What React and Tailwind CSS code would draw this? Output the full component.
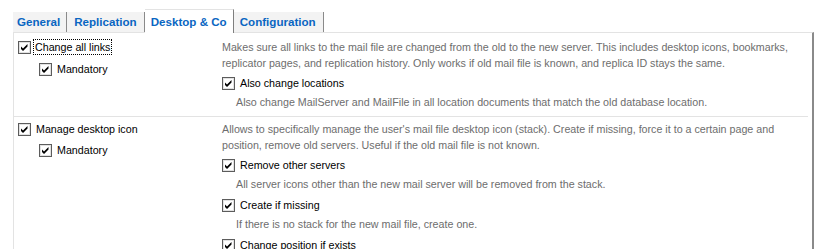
import React from "react";

const Check = () => (
  <svg width="13" height="13" viewBox="0 0 13 13" className="shrink-0">
    <rect x="0.5" y="0.5" width="12" height="12" fill="#fff" stroke="#5c5c5c" />
    <rect x="1.5" y="1.5" width="10" height="10" fill="none" stroke="#e2e2e2" />
    <polygon points="3,5.5 5,7.5 9.5,3 9.5,5.5 5,10 3,8" fill="#000" />
  </svg>
);

const Option = ({ label, focus, className = "" }) => (
  <div className={`flex items-center h-[16px] ${className}`}>
    <Check />
    <span
      className={
        focus
          ? "ml-[3px] px-[1px] leading-[14px] text-black outline outline-1 outline-dotted outline-black"
          : "ml-[5px] text-black"
      }
    >
      {label}
    </span>
  </div>
);

const Desc = ({ children, className = "" }) => (
  <p className={`text-[#6d6d6d] leading-[16px] ${className}`}>{children}</p>
);

const tabs = [
  { name: "General", pad: "pl-[4px] pr-[6px]" },
  { name: "Replication", pad: "pl-[7px] pr-[7px]" },
  { name: "Desktop & Co", pad: "pl-[6px] pr-[6px]", active: true },
  { name: "Configuration", pad: "pl-[6px] pr-[7px]" },
];

export default function App() {
  return (
    <div
      className="w-[826px] h-[249px] overflow-hidden bg-white text-[10.7px]"
      style={{ fontFamily: '"Liberation Sans", Arial, sans-serif' }}
    >
      {/* tab strip */}
      <div className="flex items-end pl-[13px] pt-[9px]">
        {tabs.map((t) =>
          t.active ? (
            <div
              key={t.name}
              className={`h-[24px] -mb-[1px] relative z-10 flex items-center bg-white border-t border-[#e3e3e3] border-r border-r-[#7f7f7f] ${t.pad} text-[11.6px] font-bold text-[#0a66c2]`}
            >
              {t.name}
            </div>
          ) : (
            <div
              key={t.name}
              className={`h-[20px] flex items-center bg-[#f3f3f3] border-r border-r-[#8a8a8a] ${t.pad} text-[11.6px] font-bold text-[#0a66c2]`}
            >
              {t.name}
            </div>
          )
        )}
      </div>

      {/* panel */}
      <div className="ml-[13px] w-[801px] h-[300px] border-l border-t border-[#e3e3e3] border-r-2 border-r-[#8a8a8a] pr-[4px]">
        {/* section 1 */}
        <div className="grid grid-cols-[208px_1fr] pt-[6px] pb-[6px]">
          <div className="pl-[4px]">
            <Option label="Change all links" focus />
            <Option label="Mandatory" className="mt-[6px] pl-[21px]" />
          </div>
          <div>
            <Desc>
              Makes sure all links to the mail file are changed from the old to the new server. This includes desktop icons, bookmarks,
              <br />
              replicator pages, and replication history. Only works if old mail file is known, and replica ID stays the same.
            </Desc>
            <Option label="Also change locations" className="mt-[4px]" />
            <Desc className="mt-[3px] pl-[14px]">
              Also change MailServer and MailFile in all location documents that match the old database location.
            </Desc>
          </div>
        </div>

        {/* section 2 */}
        <div className="grid grid-cols-[208px_1fr] border-t border-[#e3e3e3] pt-[4px]">
          <div className="pl-[4px]">
            <Option label="Manage desktop icon" />
            <Option label="Mandatory" className="mt-[5px] pl-[21px]" />
          </div>
          <div>
            <Desc>
              Allows to specifically manage the user's mail file desktop icon (stack). Create if missing, force it to a certain page and
              <br />
              position, remove old servers. Useful if the old mail file is not known.
            </Desc>
            <Option label="Remove other servers" className="mt-[4px]" />
            <Desc className="mt-[3px] pl-[14px]">
              All server icons other than the new mail server will be removed from the stack.
            </Desc>
            <Option label="Create if missing" className="mt-[5px]" />
            <Desc className="mt-[3px] pl-[14px]">If there is no stack for the new mail file, create one.</Desc>
            <Option label="Change position if exists" className="mt-[5px]" />
          </div>
        </div>
      </div>
    </div>
  );
}
